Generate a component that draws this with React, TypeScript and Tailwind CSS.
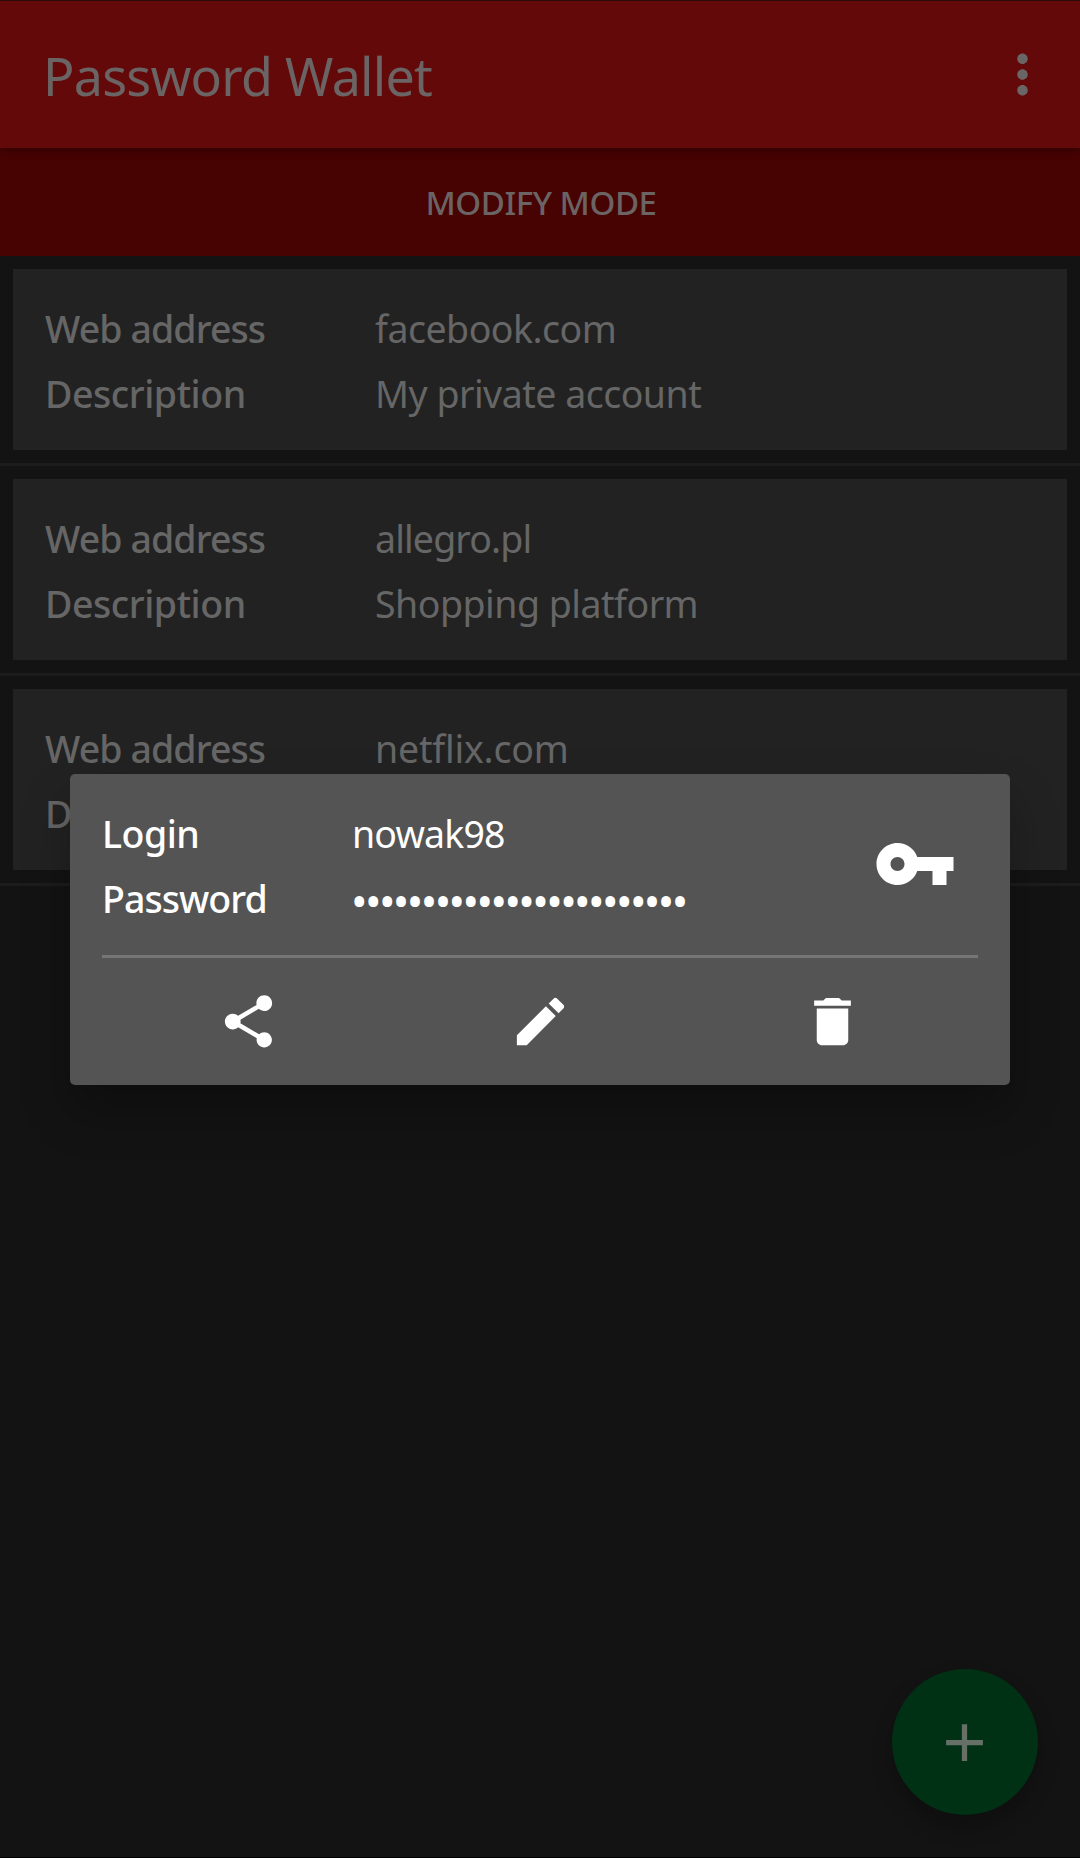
const entries = [
  { address: "facebook.com", addressTracking: "tracking-[-0.5px]", description: "My private account", descriptionTracking: "tracking-[-0.5px]" },
  { address: "allegro.pl", addressTracking: "tracking-[-0.85px]", description: "Shopping platform", descriptionTracking: "tracking-[-0.5px]" },
  { address: "netflix.com", addressTracking: "tracking-[-0.2px]", description: "", descriptionTracking: "tracking-normal" },
];

function AppBar() {
  return (
    <header className="relative z-10 flex h-[148px] items-center justify-between border-t border-[#2b0a0a] bg-[#640909] pl-[43px] pr-[26px] shadow-[0_2px_8px_rgba(0,0,0,0.35)]">
      <h1 className="pt-px text-[52px] leading-[71px] tracking-[-0.74px] text-[#6b6464]">Password Wallet</h1>
      <svg className="size-[63px] fill-[#6b6666]" viewBox="0 0 24 24">
        <path d="M12 8c1.1 0 2-.9 2-2s-.9-2-2-2-2 .9-2 2 .9 2 2 2zm0 2c-1.1 0-2 .9-2 2s.9 2 2 2 2-.9 2-2-.9-2-2-2zm0 6c-1.1 0-2 .9-2 2s.9 2 2 2 2-.9 2-2-.9-2-2-2z" />
      </svg>
    </header>
  );
}

function EntryCard({ entry }: { entry: (typeof entries)[number] }) {
  return (
    <li className="border-b-3 border-[#1c1c1c] p-[13px]">
      <dl className="grid h-[181px] grid-cols-[330px_1fr] content-between bg-[#222222] px-8 pt-[34px] pb-[30px] text-[37.5px] leading-[52px] text-[#666666]">
        <dt className="font-medium tracking-[-0.9px]">Web address</dt>
        <dd className={entry.addressTracking}>{entry.address}</dd>
        <dt className="font-medium tracking-[-0.45px]">Description</dt>
        <dd className={entry.descriptionTracking}>{entry.description}</dd>
      </dl>
    </li>
  );
}

function CredentialsDialog() {
  return (
    <section className="absolute left-[70px] top-[774px] flex h-[311px] w-[940px] flex-col rounded-[5px] bg-[#545454] px-8 pt-8 text-white shadow-[0_26px_48px_rgba(0,0,0,0.28)]">
      <div className="flex h-[152px] justify-between border-b-3 border-[#767676] pr-[21px]">
        <dl className="mt-[2px] grid h-[117px] grid-cols-[250px_auto] content-between text-[37.5px] leading-[52px]">
          <dt className="font-medium tracking-[-0.5px]">Login</dt>
          <dd className="tracking-[-0.85px]">nowak98</dd>
          <dt className="font-medium tracking-[-0.95px]">Password</dt>
          <dd className="-ml-px h-[52px] text-[44px] leading-[56px] tracking-[-2.6px]">••••••••••••••••••••••••</dd>
        </dl>
        <svg className="mt-4 size-[84px] fill-white" viewBox="0 0 24 24">
          <path d="M12.65 10C11.83 7.67 9.61 6 7 6c-3.31 0-6 2.69-6 6s2.69 6 6 6c2.61 0 4.83-1.67 5.65-4H17v4h4v-4h2v-4H12.65zM7 14c-1.1 0-2-.9-2-2s.9-2 2-2 2 .9 2 2-.9 2-2 2z" />
        </svg>
      </div>
      <div className="mt-8 grid grid-cols-3 justify-items-center">
        <svg className="size-[63px] fill-white" viewBox="0 0 24 24">
          <path d="M18 16.08c-.76 0-1.44.3-1.96.77L8.91 12.7c.05-.23.09-.46.09-.7s-.04-.47-.09-.7l7.05-4.11c.54.5 1.25.81 2.04.81 1.66 0 3-1.34 3-3s-1.34-3-3-3-3 1.34-3 3c0 .24.04.47.09.7L8.04 9.81C7.5 9.31 6.79 9 6 9c-1.66 0-3 1.34-3 3s1.34 3 3 3c.79 0 1.5-.31 2.04-.81l7.12 4.16c-.05.21-.08.43-.08.65 0 1.61 1.31 2.92 2.92 2.92s2.92-1.31 2.92-2.92-1.31-2.92-2.92-2.92z" />
        </svg>
        <svg className="size-[63px] fill-white" viewBox="0 0 24 24">
          <path d="M3 17.25V21h3.75L17.81 9.94l-3.75-3.75L3 17.25zM20.71 7.04c.39-.39.39-1.02 0-1.41l-2.34-2.34c-.39-.39-1.02-.39-1.41 0l-1.83 1.83 3.75 3.75 1.83-1.83z" />
        </svg>
        <svg className="size-[63px] fill-white" viewBox="0 0 24 24">
          <path d="M6 19c0 1.1.9 2 2 2h8c1.1 0 2-.9 2-2V7H6v12zM19 4h-3.5l-1-1h-5l-1 1H5v2h14V4z" />
        </svg>
      </div>
    </section>
  );
}

export default function App() {
  return (
    <div className="relative h-[1858px] w-[1080px] overflow-hidden border-b border-black bg-[#131313] font-['Noto_Sans',sans-serif]">
      <AppBar />
      <button className="flex h-[108px] w-full items-center justify-center bg-[#470202] pl-[2px] text-[33px] leading-[45px] font-medium tracking-[-0.45px] text-[#6b6464]">
        MODIFY MODE
      </button>
      <ul>
        {entries.map((entry) => (
          <EntryCard key={entry.address} entry={entry} />
        ))}
      </ul>
      <button className="absolute right-[42.5px] bottom-[42px] flex size-[146px] items-center justify-center rounded-full bg-[#003114] shadow-[0_12px_20px_rgba(0,0,0,0.25)]">
        <svg className="size-[63px] fill-[#667066]" viewBox="0 0 24 24">
          <path d="M19 13h-6v6h-2v-6H5v-2h6V5h2v6h6v2z" />
        </svg>
      </button>
      <CredentialsDialog />
    </div>
  );
}
